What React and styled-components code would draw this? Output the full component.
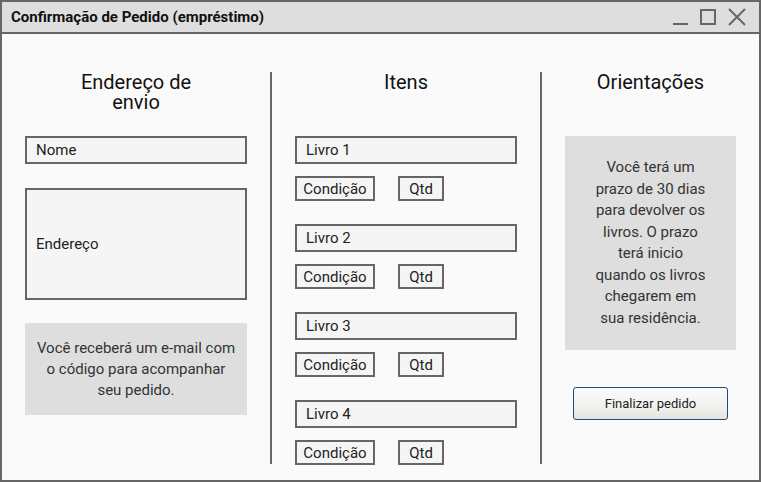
import React from "react";
import styled, { createGlobalStyle } from "styled-components";

const Global = createGlobalStyle`
  html, body { margin: 0; padding: 0; }
  body { font-family: Roboto, "Liberation Sans", sans-serif; background: #fafafa; }
  * { box-sizing: border-box; }
`;

const Window = styled.div`
  width: 761px;
  height: 482px;
  border: 2px solid #666;
  background: #fafafa;
  display: flex;
  flex-direction: column;
  overflow: hidden;
`;

const TitleBar = styled.div`
  flex: 0 0 32px;
  height: 32px;
  background: #dedede;
  border-bottom: 2px solid #666;
  display: flex;
  align-items: center;
  justify-content: space-between;
  padding: 0 13px 0 9px;
`;

const Title = styled.div`
  font-size: 15px;
  font-weight: 700;
  color: #111;
`;

const Controls = styled.div`
  display: flex;
  align-items: center;
  gap: 12px;
`;

const Content = styled.div`
  flex: 1 1 auto;
  min-height: 0;
  display: grid;
  grid-template-columns: 268px 2px 268px 2px 1fr;
  grid-template-rows: 1fr;
  padding: 38px 0 16px 0;
`;

const Divider = styled.div`
  background: #666;
  width: 2px;
`;

const Column = styled.div`
  display: flex;
  flex-direction: column;
  align-items: center;
  min-height: 0;
`;

const Heading = styled.div`
  height: 64px;
  flex-shrink: 0;
  font-size: 20px;
  line-height: 20px;
  color: #111;
  text-align: center;
  max-width: ${(p) => p.$max || "none"};
`;

const Field = styled.div`
  flex-shrink: 0;
  width: ${(p) => p.$w || 222}px;
  height: ${(p) => p.$h || 28}px;
  border: 2px solid #666;
  background: #f5f5f5;
  font-size: 15px;
  color: #222;
  display: flex;
  align-items: center;
  padding-left: 9px;
  margin-bottom: ${(p) => p.$mb || 0}px;
`;

const InfoBox = styled.div`
  flex-shrink: 0;
  width: ${(p) => p.$w}px;
  height: ${(p) => p.$h}px;
  background: #dedede;
  font-size: 15px;
  line-height: ${(p) => p.$lh}px;
  color: #333;
  text-align: center;
  display: flex;
  align-items: center;
  justify-content: center;
  padding: 0 ${(p) => p.$px}px;
`;

const ItemList = styled.div`
  display: flex;
  flex-direction: column;
  gap: 23px;
`;

const ItemGroup = styled.div`
  width: 222px;
  display: flex;
  flex-direction: column;
  gap: 12px;
`;

const ItemRow = styled.div`
  display: flex;
  gap: 23px;
`;

const SmallBox = styled.div`
  width: ${(p) => p.$w}px;
  height: 25px;
  border: 2px solid #666;
  background: #f5f5f5;
  font-size: 15px;
  color: #222;
  display: flex;
  align-items: center;
  justify-content: center;
`;

const Button = styled.button`
  margin-top: 37px;
  width: 155px;
  height: 33px;
  flex-shrink: 0;
  border: 1px solid #234a7a;
  border-radius: 3px;
  background: linear-gradient(#fbfbfb, #f1f1ee 60%, #e4e4dc);
  font-family: Roboto, "Liberation Sans", sans-serif;
  font-size: 13px;
  color: #222;
  padding: 0;
`;

const books = ["Livro 1", "Livro 2", "Livro 3", "Livro 4"];

export default function App() {
  return (
    <>
      <Global />
      <Window>
        <TitleBar>
          <Title>Confirmação de Pedido (empréstimo)</Title>
          <Controls>
            <svg width="15" height="18" viewBox="0 0 15 18">
              <line x1="0" y1="16" x2="15" y2="16" stroke="#666" strokeWidth="2" />
            </svg>
            <svg width="16" height="18" viewBox="0 0 16 18">
              <rect x="1" y="2" width="14" height="14" fill="none" stroke="#666" strokeWidth="2" />
            </svg>
            <svg width="18" height="18" viewBox="0 0 18 18">
              <path d="M1 1 L17 17 M17 1 L1 17" stroke="#666" strokeWidth="2" />
            </svg>
          </Controls>
        </TitleBar>
        <Content>
          <Column>
            <Heading $max="130px">Endereço de envio</Heading>
            <Field $mb={24}>Nome</Field>
            <Field $h={112} $mb={23}>Endereço</Field>
            <InfoBox $w={222} $h={92} $lh={21} $px={10}>
              Você receberá um e-mail com o código para acompanhar seu pedido.
            </InfoBox>
          </Column>
          <Divider />
          <Column>
            <Heading>Itens</Heading>
            <ItemList>
              {books.map((b) => (
                <ItemGroup key={b}>
                  <Field>{b}</Field>
                  <ItemRow>
                    <SmallBox $w={80}>Condição</SmallBox>
                    <SmallBox $w={46}>Qtd</SmallBox>
                  </ItemRow>
                </ItemGroup>
              ))}
            </ItemList>
          </Column>
          <Divider />
          <Column>
            <Heading>Orientações</Heading>
            <InfoBox $w={171} $h={214} $lh={21.5} $px={28}>
              Você terá um prazo de 30 dias para devolver os livros. O prazo terá inicio quando os livros chegarem em sua residência.
            </InfoBox>
            <Button>Finalizar pedido</Button>
          </Column>
        </Content>
      </Window>
    </>
  );
}
